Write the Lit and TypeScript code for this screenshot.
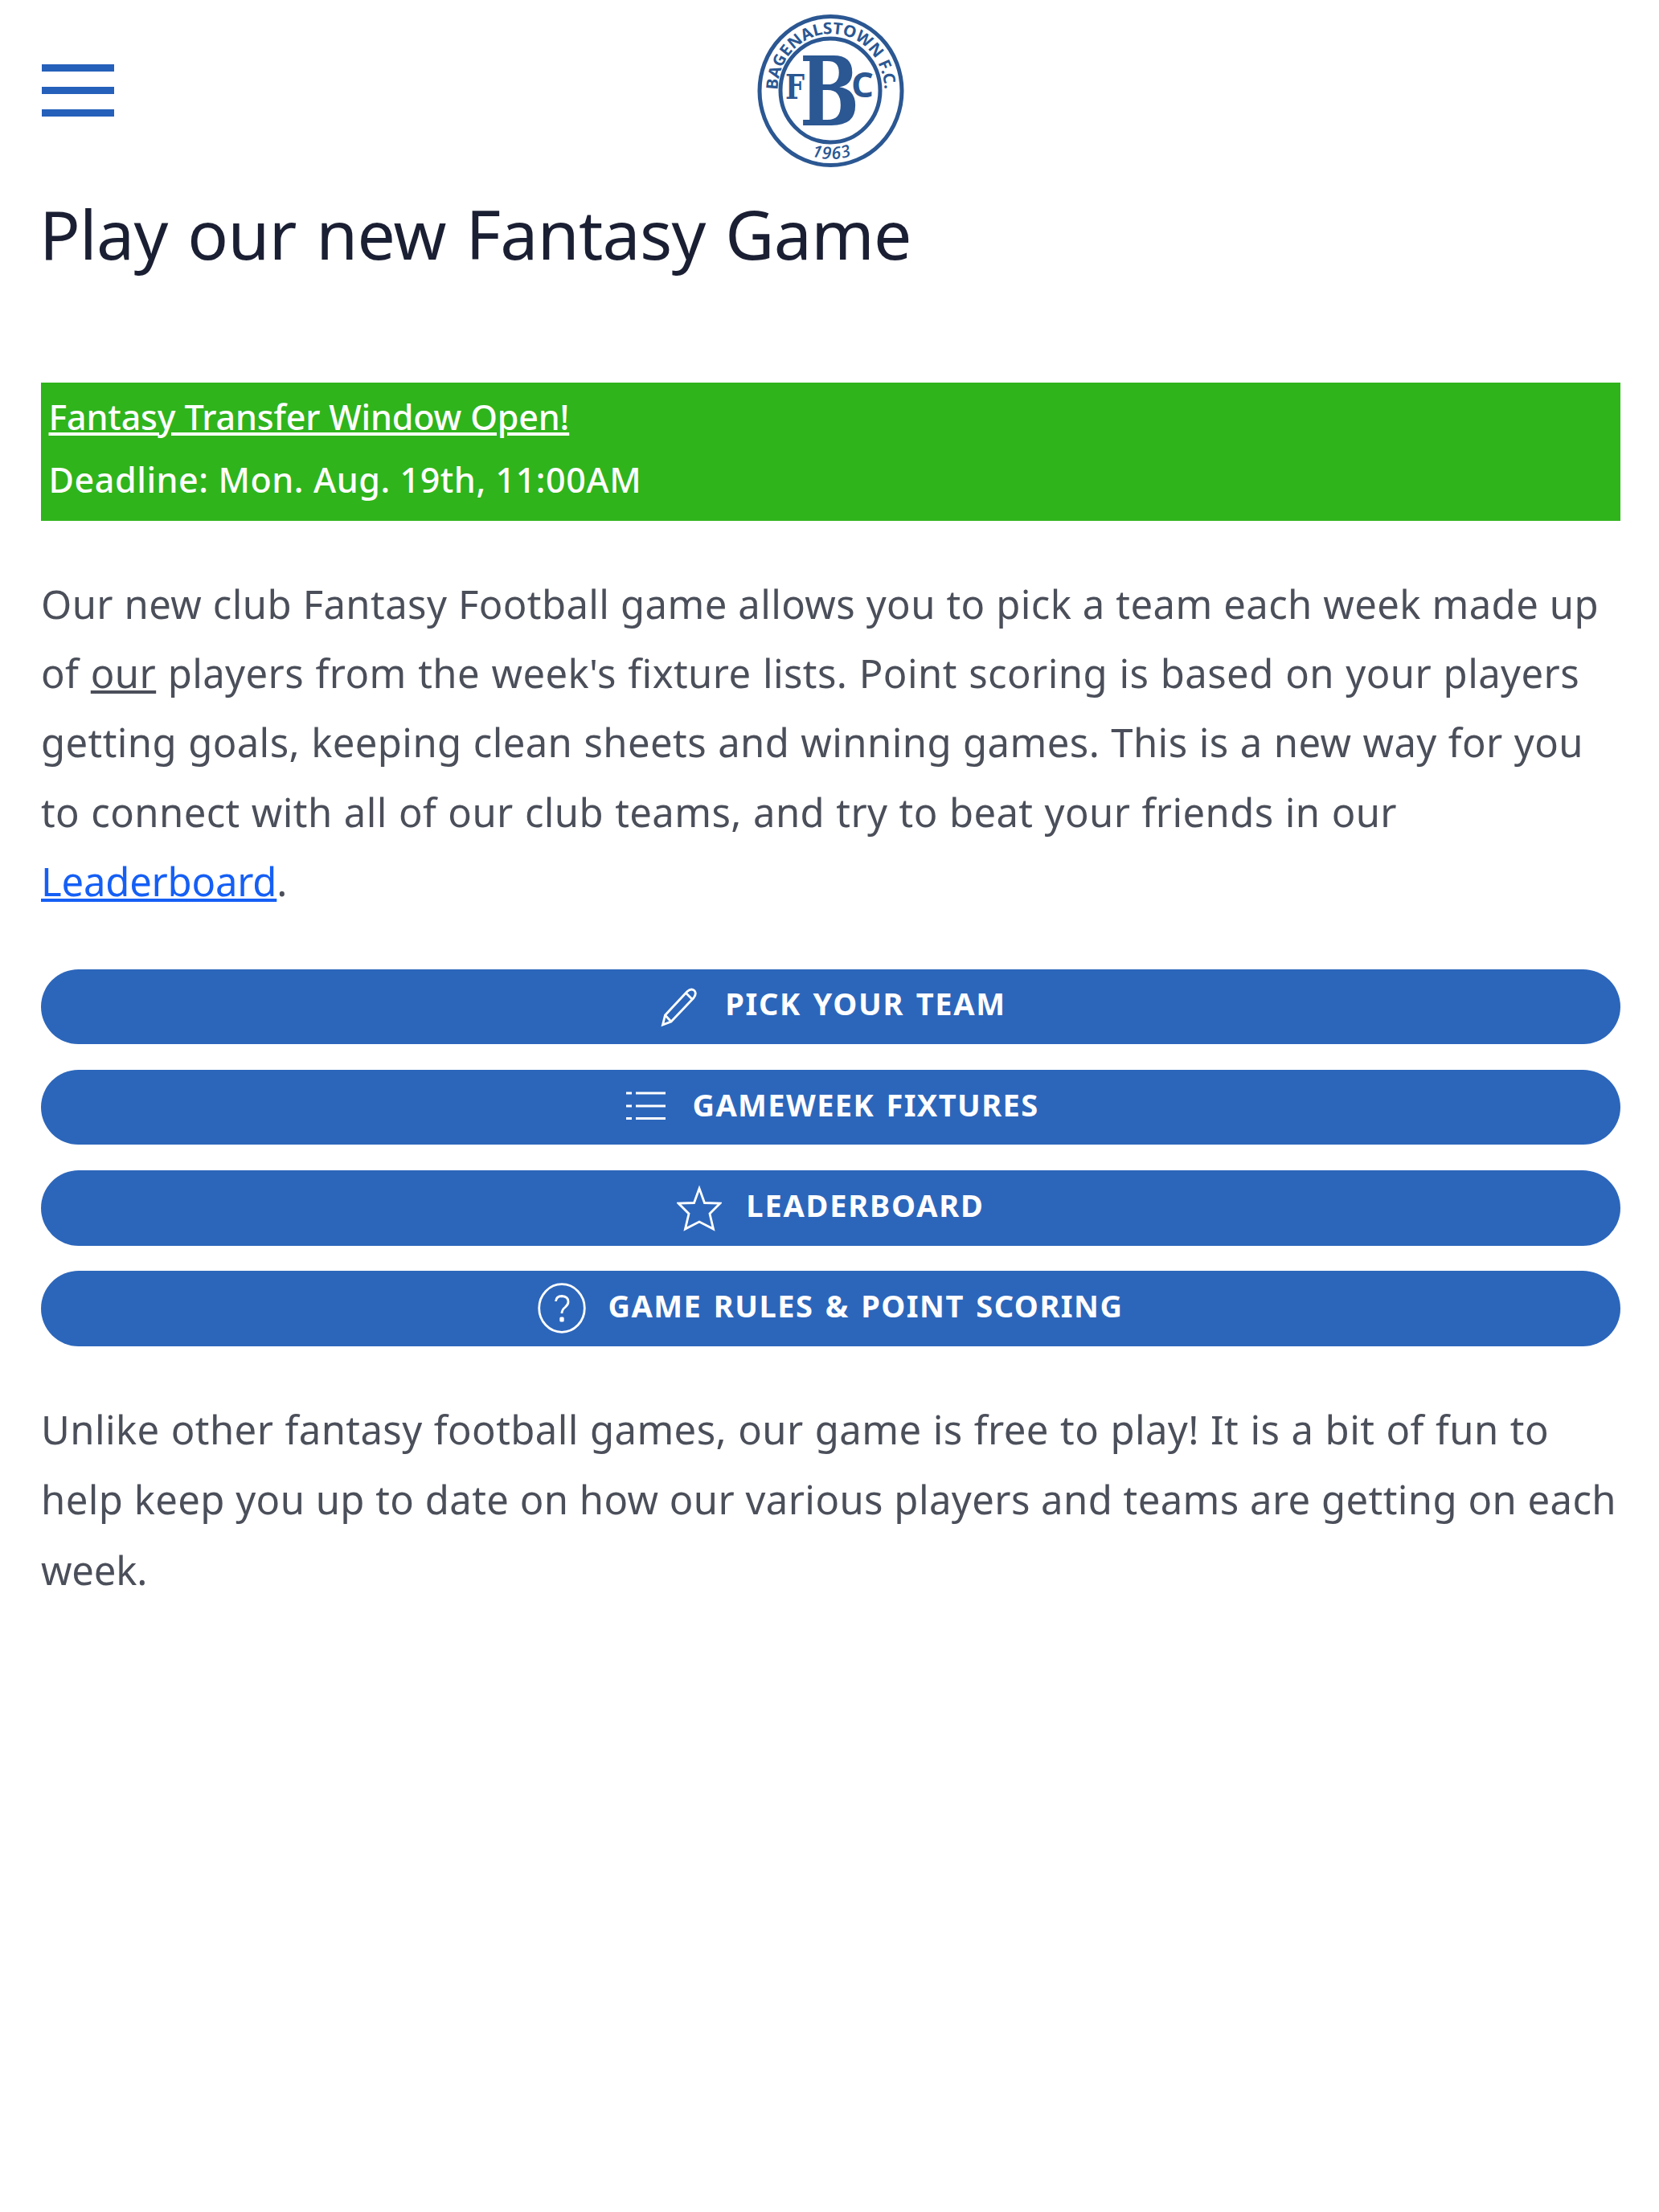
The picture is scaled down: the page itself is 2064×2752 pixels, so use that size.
import { LitElement, html, svg, css } from "lit";
import { customElement, property } from "lit/decorators.js";

@customElement("club-crest")
export class ClubCrest extends LitElement {
  static styles = css`
    :host {
      display: block;
    }
    svg {
      display: block;
      width: 190px;
      height: 196px;
      overflow: visible;
    }
    .ring {
      fill: none;
      stroke: #2b5792;
    }
    text {
      fill: #2b5792;
    }
    .name {
      font: 700 20px "Noto Sans", sans-serif;
    }
    .year {
      font: italic 600 21px "Open Sans", sans-serif;
    }
    .big {
      font: 700 119px "DejaVu Serif", serif;
    }
    .small-f {
      font: 700 42px "DejaVu Serif", serif;
    }
    .small-c {
      font: 700 43px "Open Sans", sans-serif;
    }
  `;
  render() {
    return html`<svg viewBox="0 0 190 196">
      <defs>
        <path id="top" d="M28.5 97 A66.5 70 0 0 1 161.5 97" />
        <path id="bottom" d="M13 97 A82 86 0 0 0 177 97" />
      </defs>
      <ellipse class="ring" cx="94.5" cy="98" rx="88.5" ry="92.5" stroke-width="5"></ellipse>
      <ellipse class="ring" cx="94" cy="97.5" rx="62" ry="64.5" stroke-width="5"></ellipse>
      <text class="name"><textPath href="#top" textLength="213" lengthAdjust="spacingAndGlyphs">BAGENALSTOWN F.C.</textPath></text>
      <text class="year" text-anchor="middle" letter-spacing="1.5"><textPath href="#bottom" startOffset="50.5%">1963</textPath></text>
      <text class="big" x="56" y="141" textLength="74" lengthAdjust="spacingAndGlyphs">B</text>
      <text class="small-f" x="38" y="108" textLength="24" lengthAdjust="spacingAndGlyphs">F</text>
      <text class="small-c" x="120" y="106" textLength="28" lengthAdjust="spacingAndGlyphs">C</text>
    </svg>`;
  }
}

const icons = {
  pencil: svg`<svg class="icon pencil" viewBox="0 0 46 94">
    <path d="M2.5 70 L5.5 58 L33 28.5 Q38 24 42 27.5 Q45 31.5 41 36.5 L13 66 Z M32 31 L38.5 37.5 M5.5 58 L12.5 65.5"/></svg>`,
  list: svg`<svg class="icon list" viewBox="0 0 49 94">
    <path d="M0 29h7M12 29h37M0 45h7M12 45h37M0 60.5h7M12 60.5h37"/></svg>`,
  star: svg`<svg class="icon star" viewBox="0 0 56 94">
    <path d="M28 22.5 L34.5 40.5 L54 41 L41 54 L45.5 73 L28 64 L10.5 73 L15 54 L2 41 L21.5 40.5 Z"/></svg>`,
  help: svg`<svg class="icon help" viewBox="0 0 60 94">
    <ellipse cx="30" cy="46.5" rx="28.3" ry="29.8"/>
    <path d="M22.5 38 Q23 31.5 30 31.5 Q38 32 38 38.5 Q38 42 34 45.5 Q30 48.5 30 53"/>
    <rect class="dot" x="27.3" y="57.5" width="5.4" height="6" rx="1.5"/></svg>`,
};

@customElement("pill-button")
export class PillButton extends LitElement {
  @property() icon: keyof typeof icons = "pencil";
  @property() label = "";
  static styles = css`
    :host {
      display: block;
    }
    .pill {
      display: flex;
      align-items: center;
      justify-content: center;
      box-sizing: border-box;
      width: 100%;
      height: 93.5px;
      padding: 0;
      border: 0;
      border-radius: 47px;
      background: #2c66bb;
      color: #fff;
      font: 700 38px/60px "Noto Sans", "Open Sans", sans-serif;
      word-spacing: 3px;
      white-space: nowrap;
    }
    .text {
      padding-bottom: 8px;
    }
    .icon {
      height: 94px;
      flex: none;
      fill: none;
      stroke: #fff;
      stroke-width: 2.8;
    }
    .icon.pencil { width: 46px; }
    .icon.list { width: 49px; stroke-width: 3.2; }
    .icon.star { width: 56px; }
    .icon.help { width: 60px; }
    .dot { fill: #fff; stroke: none; }
    .pill.pencil { gap: 34px; padding-left: 7px; letter-spacing: 1.7px; }
    .pill.list { gap: 33px; padding-left: 5px; letter-spacing: 1.4px; }
    .pill.star { gap: 30px; letter-spacing: 1.8px; }
    .pill.help { gap: 27px; letter-spacing: 1.5px; }
  `;
  render() {
    return html`<button class="pill ${this.icon}">
      ${icons[this.icon]}<span class="text">${this.label}</span>
    </button>`;
  }
}

@customElement("app-root")
export class AppRoot extends LitElement {
  static styles = css`
    :host {
      display: block;
      min-height: 2752px;
      background: #fff;
      font-family: "Noto Sans", "Open Sans", sans-serif;
      color: #4b4f5a;
    }
    .header {
      display: grid;
      grid-template-columns: 1fr auto 1fr;
      align-items: center;
      height: 225px;
      padding: 0 48px 0 51.5px;
    }
    .menu {
      display: flex;
      flex-direction: column;
      gap: 18.7px;
      width: 90px;
      padding: 0;
      border: 0;
      background: none;
    }
    .bar {
      height: 9.5px;
      background: #2560bb;
    }
    .content {
      padding: 15.5px 48px 0 51px;
    }
    .title {
      margin: 0 0 135px -2px;
      font-size: 84px;
      line-height: 100px;
      font-weight: 400;
      letter-spacing: -0.7px;
      word-spacing: 3.5px;
      color: #1b1f33;
    }
    .banner {
      height: 172.5px;
      box-sizing: border-box;
      padding: 4px 9.5px;
      background: #2fb41c;
      color: #fff;
      font-size: 43px;
      line-height: 78px;
      font-weight: 500;
      white-space: nowrap;
    }
    .window {
      letter-spacing: -0.15px;
      text-decoration: underline;
      text-decoration-thickness: 3.5px;
      text-underline-offset: 3px;
    }
    .deadline {
      letter-spacing: 0.58px;
    }
    .copy {
      margin: 0;
      font-size: 49px;
      line-height: 86.2px;
      letter-spacing: 0.4px;
    }
    .intro {
      margin: 60px 0 66.5px;
    }
    .outro {
      margin-top: 60px;
      line-height: 87.5px;
    }
    .line {
      display: block;
      white-space: nowrap;
      text-align-last: justify;
    }
    .w1 { width: 1938px; }
    .w2 { width: 1914px; }
    .w3 { width: 1919px; }
    .w4 { width: 1687px; }
    .w5 { width: 1876px; }
    .w6 { width: 1960px; }
    .short {
      display: block;
      letter-spacing: -0.2px;
    }
    u, .link {
      text-decoration: underline;
      text-decoration-thickness: 4px;
      text-underline-offset: 2.5px;
    }
    .link {
      color: #155ff5;
    }
    .actions {
      display: flex;
      flex-direction: column;
      gap: 31.8px;
    }
  `;
  render() {
    return html`
      <header class="header">
        <button class="menu" aria-label="Menu">
          <span class="bar"></span><span class="bar"></span><span class="bar"></span>
        </button>
        <club-crest></club-crest>
      </header>
      <main class="content">
        <h1 class="title">Play our new Fantasy Game</h1>
        <section class="banner">
          <div><span class="window">Fantasy Transfer Window Open!</span></div>
          <div class="deadline">Deadline: Mon. Aug. 19th, 11:00AM</div>
        </section>
        <p class="copy intro">
          <span class="line w1">Our new club Fantasy Football game allows you to pick a team each week made up</span>
          <span class="line w2">of <u>our</u> players from the week's fixture lists. Point scoring is based on your players</span>
          <span class="line w3">getting goals, keeping clean sheets and winning games. This is a new way for you</span>
          <span class="line w4">to connect with all of our club teams, and try to beat your friends in our</span>
          <span class="short"><a class="link">Leaderboard</a>.</span>
        </p>
        <nav class="actions">
          <pill-button icon="pencil" label="PICK YOUR TEAM"></pill-button>
          <pill-button icon="list" label="GAMEWEEK FIXTURES"></pill-button>
          <pill-button icon="star" label="LEADERBOARD"></pill-button>
          <pill-button icon="help" label="GAME RULES &amp; POINT SCORING"></pill-button>
        </nav>
        <p class="copy outro">
          <span class="line w5">Unlike other fantasy football games, our game is free to play! It is a bit of fun to</span>
          <span class="line w6">help keep you up to date on how our various players and teams are getting on each</span>
          <span class="short">week.</span>
        </p>
      </main>
    `;
  }
}
